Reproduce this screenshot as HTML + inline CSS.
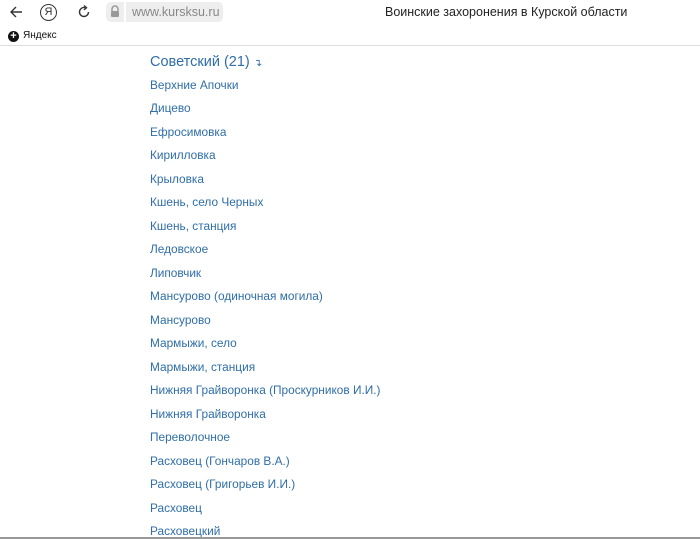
<!DOCTYPE html>
<html><head><meta charset="utf-8"><style>
body{margin:0;width:700px;height:539px;overflow:hidden;background:#fff;font-family:"Liberation Sans","DejaVu Sans",sans-serif;position:relative}
.a{position:absolute}
.it{position:absolute;left:150px;font-size:11.85px;color:#2f6ea8;white-space:nowrap;line-height:14px}
</style></head><body>
<svg class="a" style="left:8px;top:4px" width="16" height="16" viewBox="0 0 16 16"><path d="M14 8H3M8 3L3 8l5 5" fill="none" stroke="#333" stroke-width="1.4"/></svg>
<div class="a" style="left:40px;top:4px;width:15px;height:15px;border:1.3px solid #333;border-radius:50%;font-size:11px;text-align:center;line-height:15px;color:#333">Я</div>
<svg class="a" style="left:76px;top:4px" width="16" height="16" viewBox="0 0 16 16"><path d="M12.5 8A4.5 4.5 0 1 1 9 3.6" fill="none" stroke="#333" stroke-width="1.4"/><path d="M8 1.5l2.5 2.2L8 5.8" fill="none" stroke="#333" stroke-width="1.4"/></svg>
<div class="a" style="left:106px;top:2px;width:117px;height:20px;background:#eee;border-radius:5px"></div>
<div class="a" style="left:124px;top:2px;width:2px;height:20px;background:#fff"></div>
<svg class="a" style="left:109px;top:5px" width="12" height="13" viewBox="0 0 12 13"><path d="M3 6V4a3 3 0 0 1 6 0v2" fill="none" stroke="#999" stroke-width="1.5"/><rect x="2" y="6" width="8" height="6" rx="1" fill="#999"/></svg>
<div class="a" style="left:132px;top:5px;font-size:12.5px;color:#888">www.kursksu.ru</div>
<div class="a" style="left:385px;top:5px;font-size:12.5px;color:#222">Воинские захоронения в Курской области</div>
<div class="a" style="left:8px;top:31px;width:11px;height:11px;border-radius:50%;background:#111;color:#fff;font-size:11px;line-height:11px;text-align:center;font-weight:bold">+</div>
<div class="a" style="left:23px;top:30px;font-size:10px;color:#111">Яндекс</div>
<div class="a" style="left:0;top:45px;width:700px;height:1px;background:#ddd"></div>
<div class="a" style="left:150px;top:54px;font-size:14.5px;color:#2f6ea8">Советский (21) <span style="font-size:10px">↴</span></div>
<div class="it" style="top:78px">Верхние Апочки</div>
<div class="it" style="top:101px">Дицево</div>
<div class="it" style="top:125px">Ефросимовка</div>
<div class="it" style="top:148px">Кирилловка</div>
<div class="it" style="top:172px">Крыловка</div>
<div class="it" style="top:195px">Кшень, село Черных</div>
<div class="it" style="top:219px">Кшень, станция</div>
<div class="it" style="top:242px">Ледовское</div>
<div class="it" style="top:266px">Липовчик</div>
<div class="it" style="top:289px">Мансурово (одиночная могила)</div>
<div class="it" style="top:313px">Мансурово</div>
<div class="it" style="top:336px">Мармыжи, село</div>
<div class="it" style="top:360px">Мармыжи, станция</div>
<div class="it" style="top:383px">Нижняя Грайворонка (Проскурников И.И.)</div>
<div class="it" style="top:407px">Нижняя Грайворонка</div>
<div class="it" style="top:430px">Переволочное</div>
<div class="it" style="top:454px">Расховец (Гончаров В.А.)</div>
<div class="it" style="top:477px">Расховец (Григорьев И.И.)</div>
<div class="it" style="top:501px">Расховец</div>
<div class="it" style="top:524px">Расховецкий</div>
<div class="a" style="left:0;top:537px;width:700px;height:2px;background:#999"></div>
</body></html>
